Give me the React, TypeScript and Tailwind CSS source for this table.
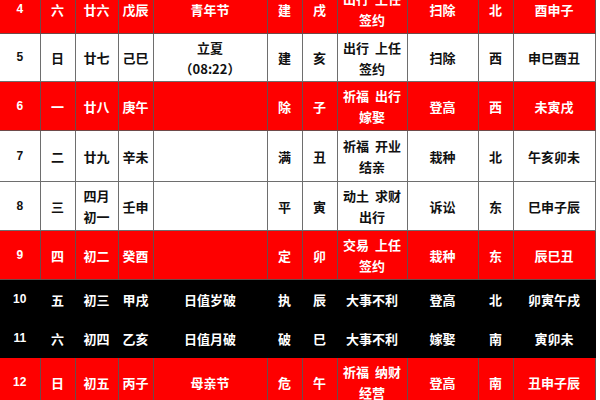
type Tone = 'red' | 'white' | 'black';

type Row = {
  day: string;
  week: string;
  lunar: string[];
  gz: string;
  note: string[];
  jian: string;
  zhi: string;
  yi: string[];
  ji: string;
  dir: string;
  hours: string;
  tone: Tone;
  h: string;
};

const rows: Row[] = [
  { day: '4', week: '六', lunar: ['廿六'], gz: '戊辰', note: ['青年节'], jian: '建', zhi: '戌', yi: ['出行 上任', '签约'], ji: '扫除', dir: '北', hours: '酉申子', tone: 'red', h: 'h-[49px]' },
  { day: '5', week: '日', lunar: ['廿七'], gz: '己巳', note: ['立夏', '（08:22）'], jian: '建', zhi: '亥', yi: ['出行 上任', '签约'], ji: '扫除', dir: '西', hours: '申巳酉丑', tone: 'white', h: 'h-[48px]' },
  { day: '6', week: '一', lunar: ['廿八'], gz: '庚午', note: [], jian: '除', zhi: '子', yi: ['祈福 出行', '嫁娶'], ji: '登高', dir: '西', hours: '未寅戌', tone: 'red', h: 'h-[49px]' },
  { day: '7', week: '二', lunar: ['廿九'], gz: '辛未', note: [], jian: '满', zhi: '丑', yi: ['祈福 开业', '结亲'], ji: '栽种', dir: '北', hours: '午亥卯未', tone: 'white', h: 'h-[51px]' },
  { day: '8', week: '三', lunar: ['四月', '初一'], gz: '壬申', note: [], jian: '平', zhi: '寅', yi: ['动土 求财', '出行'], ji: '诉讼', dir: '东', hours: '巳申子辰', tone: 'white', h: 'h-[49px]' },
  { day: '9', week: '四', lunar: ['初二'], gz: '癸酉', note: [], jian: '定', zhi: '卯', yi: ['交易 上任', '签约'], ji: '栽种', dir: '东', hours: '辰巳丑', tone: 'red', h: 'h-[49px]' },
  { day: '10', week: '五', lunar: ['初三'], gz: '甲戌', note: ['日值岁破'], jian: '执', zhi: '辰', yi: ['大事不利'], ji: '登高', dir: '北', hours: '卯寅午戌', tone: 'black', h: 'h-[39px]' },
  { day: '11', week: '六', lunar: ['初四'], gz: '乙亥', note: ['日值月破'], jian: '破', zhi: '巳', yi: ['大事不利'], ji: '嫁娶', dir: '南', hours: '寅卯未', tone: 'black', h: 'h-[39px]' },
  { day: '12', week: '日', lunar: ['初五'], gz: '丙子', note: ['母亲节'], jian: '危', zhi: '午', yi: ['祈福 纳财', '经营'], ji: '登高', dir: '南', hours: '丑申子辰', tone: 'red', h: 'h-[49px]' },
];

const toneRow: Record<Tone, string> = {
  red: 'bg-[#fe0000] text-white',
  white: 'bg-white text-[#111]',
  black: 'bg-black text-white',
};

const toneCell: Record<Tone, string> = {
  red: 'border border-[#6e4a4a]',
  white: 'border border-[#6e6e6e]',
  black: 'border border-black',
};

function Lines({ items }: { items: string[] }) {
  return (
    <>
      {items.map((t, i) => (
        <div key={i} className="whitespace-pre">{t.replace(' ', '  ')}</div>
      ))}
    </>
  );
}

export default function App() {
  return (
    <div className="w-[600px] h-[400px] overflow-hidden bg-white">
      <table
        className="mt-[-16px] w-[595px] table-fixed border-collapse text-center font-bold text-[13px] leading-[21px]"
        style={{ fontFamily: '"Noto Sans CJK SC", "Noto Sans", sans-serif' }}
      >
        <colgroup>
          <col className="w-[40px]" />
          <col className="w-[35px]" />
          <col className="w-[43px]" />
          <col className="w-[35px]" />
          <col className="w-[114px]" />
          <col className="w-[35px]" />
          <col className="w-[35px]" />
          <col className="w-[70px]" />
          <col className="w-[71px]" />
          <col className="w-[35px]" />
          <col className="w-[82px]" />
        </colgroup>
        <tbody>
          {rows.map((r) => {
            const c = toneCell[r.tone];
            return (
              <tr key={r.day} className={`${toneRow[r.tone]} ${r.h}`}>
                <td className={`${c} border-l-0 text-[12px] font-['Liberation_Sans',sans-serif]`}>{r.day}</td>
                <td className={c}>{r.week}</td>
                <td className={c}><Lines items={r.lunar} /></td>
                <td className={c}>{r.gz}</td>
                <td className={c}><Lines items={r.note} /></td>
                <td className={c}>{r.jian}</td>
                <td className={c}>{r.zhi}</td>
                <td className={c}><Lines items={r.yi} /></td>
                <td className={c}>{r.ji}</td>
                <td className={c}>{r.dir}</td>
                <td className={c}>{r.hours}</td>
              </tr>
            );
          })}
        </tbody>
      </table>
    </div>
  );
}
